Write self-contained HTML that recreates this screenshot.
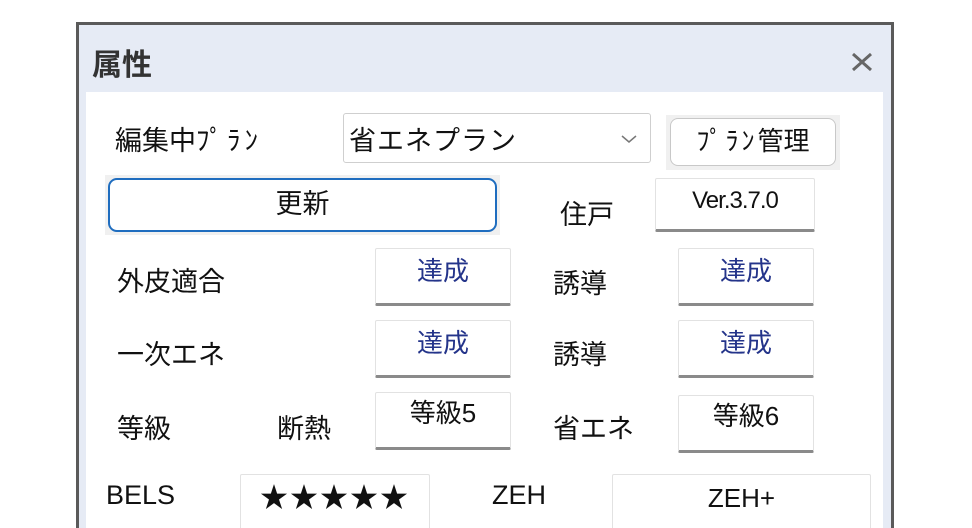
<!DOCTYPE html>
<html><head><meta charset="utf-8"><style>
html,body{margin:0;padding:0;background:#fff;width:972px;height:528px;overflow:hidden}
body{position:relative;font-family:"Liberation Sans","Noto Sans CJK JP",sans-serif;color:#111}
.a{position:absolute;white-space:nowrap}
.win{position:absolute;left:76px;top:22px;width:812px;height:520px;border:3px solid #5a5a5a;border-bottom:none;background:#e6ebf5}
.content{position:absolute;left:86px;top:92px;width:797px;height:440px;background:#fff}
.btn{position:absolute;background:#fff;border:1px solid #e2e2e2;border-bottom:3px solid #8a8a8a;box-sizing:border-box;text-align:center;font-size:26px;line-height:44px;border-radius:2px}
.blue{color:#24348a}
.t{font-size:27px}
</style></head><body>
<div class="win"></div>
<div class="content"></div>
<div class="a" style="left:92px;top:40px;font-size:30px;font-weight:bold;color:#333">属性</div>
<svg class="a" style="left:851px;top:52px" width="22" height="20"><path d="M2 2L20 18M20 2L2 18" stroke="#666" stroke-width="3"/></svg>

<div class="a t" style="left:115px;top:119px">編集中<span style="letter-spacing:4px">ﾌﾟﾗﾝ</span></div>
<div class="a" style="left:343px;top:113px;width:308px;height:50px;border:1px solid #cfcfcf;border-radius:3px;box-sizing:border-box"></div>
<div class="a t" style="left:349px;top:119px;letter-spacing:1px">省エネプラン</div>
<svg class="a" style="left:620px;top:133px" width="18" height="12"><path d="M2 3L9 9L16 3" stroke="#777" stroke-width="1.5" fill="none"/></svg>
<div class="a" style="left:666px;top:115px;width:174px;height:55px;background:#f0f0f0"></div>
<div class="a" style="left:670px;top:118px;width:166px;height:48px;background:#fff;border:1px solid #c8c8c8;border-radius:8px;box-sizing:border-box;text-align:center;font-size:26px;line-height:44px"><span style="letter-spacing:3px">ﾌﾟﾗﾝ</span>管理</div>

<div class="a" style="left:105px;top:175px;width:395px;height:60px;background:#f0f0f0"></div>
<div class="a" style="left:108px;top:178px;width:389px;height:54px;background:#fff;border:2px solid #1f6dbf;border-radius:9px;box-sizing:border-box;text-align:center;font-size:27px;line-height:48px">更新</div>
<div class="a t" style="left:560px;top:193px">住戸</div>
<div class="btn" style="left:655px;top:178px;width:160px;height:54px;line-height:44px;font-size:24px;letter-spacing:-1px">Ver.3.7.0</div>

<div class="a t" style="left:117px;top:260px">外皮適合</div>
<div class="btn blue" style="left:375px;top:248px;width:136px;height:58px">達成</div>
<div class="a t" style="left:553px;top:262px">誘導</div>
<div class="btn blue" style="left:678px;top:248px;width:136px;height:58px">達成</div>

<div class="a t" style="left:117px;top:333px">一次エネ</div>
<div class="btn blue" style="left:375px;top:320px;width:136px;height:58px">達成</div>
<div class="a t" style="left:553px;top:333px">誘導</div>
<div class="btn blue" style="left:678px;top:320px;width:136px;height:58px">達成</div>

<div class="a t" style="left:117px;top:407px">等級</div>
<div class="a t" style="left:277px;top:407px">断熱</div>
<div class="btn" style="left:375px;top:392px;width:136px;height:58px;line-height:40px">等級5</div>
<div class="a t" style="left:553px;top:407px">省エネ</div>
<div class="btn" style="left:678px;top:395px;width:136px;height:58px;line-height:40px">等級6</div>

<div class="a t" style="left:106px;top:480px">BELS</div>
<div class="btn" style="left:240px;top:474px;width:190px;height:60px;line-height:46px;font-size:28px;letter-spacing:2px">★★★★★</div>
<div class="a t" style="left:492px;top:480px">ZEH</div>
<div class="btn" style="left:612px;top:474px;width:259px;height:60px;line-height:46px">ZEH+</div>
</body></html>
